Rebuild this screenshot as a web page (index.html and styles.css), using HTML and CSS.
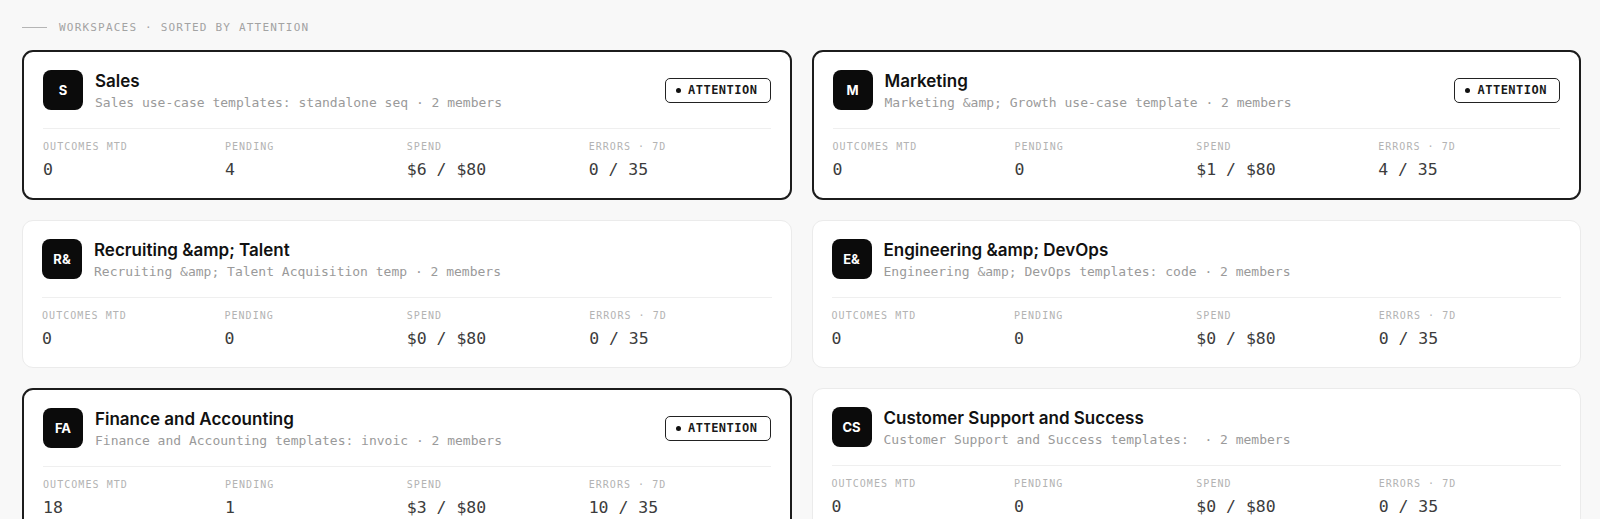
FILE: index.html
```html
<!DOCTYPE html>
<html lang="en">
<head>
<meta charset="utf-8">
<title>Workspaces</title>
<link rel="stylesheet" href="styles.css">
</head>
<body>
<div class="page">
  <div class="section-label"><span class="rule"></span><span>WORKSPACES · SORTED BY ATTENTION</span></div>
  <div class="grid">
    <div class="card attention">
      <div class="card-head">
        <div class="avatar">S</div>
        <div class="titles">
          <div class="title">Sales</div>
          <div class="sub">Sales use-case templates: standalone seq · 2 members</div>
        </div>
        <div class="badge"><span class="dot"></span>ATTENTION</div>
      </div>
      <div class="stats">
        <div class="stat"><div class="label">OUTCOMES MTD</div><div class="value">0</div></div>
        <div class="stat"><div class="label">PENDING</div><div class="value">4</div></div>
        <div class="stat"><div class="label">SPEND</div><div class="value">$6 / $80</div></div>
        <div class="stat"><div class="label">ERRORS · 7D</div><div class="value">0 / 35</div></div>
      </div>
    </div>

    <div class="card attention">
      <div class="card-head">
        <div class="avatar">M</div>
        <div class="titles">
          <div class="title">Marketing</div>
          <div class="sub">Marketing &amp;amp; Growth use-case template · 2 members</div>
        </div>
        <div class="badge"><span class="dot"></span>ATTENTION</div>
      </div>
      <div class="stats">
        <div class="stat"><div class="label">OUTCOMES MTD</div><div class="value">0</div></div>
        <div class="stat"><div class="label">PENDING</div><div class="value">0</div></div>
        <div class="stat"><div class="label">SPEND</div><div class="value">$1 / $80</div></div>
        <div class="stat"><div class="label">ERRORS · 7D</div><div class="value">4 / 35</div></div>
      </div>
    </div>

    <div class="card">
      <div class="card-head">
        <div class="avatar">R&amp;</div>
        <div class="titles">
          <div class="title">Recruiting &amp;amp; Talent</div>
          <div class="sub">Recruiting &amp;amp; Talent Acquisition temp · 2 members</div>
        </div>
      </div>
      <div class="stats">
        <div class="stat"><div class="label">OUTCOMES MTD</div><div class="value">0</div></div>
        <div class="stat"><div class="label">PENDING</div><div class="value">0</div></div>
        <div class="stat"><div class="label">SPEND</div><div class="value">$0 / $80</div></div>
        <div class="stat"><div class="label">ERRORS · 7D</div><div class="value">0 / 35</div></div>
      </div>
    </div>

    <div class="card">
      <div class="card-head">
        <div class="avatar">E&amp;</div>
        <div class="titles">
          <div class="title">Engineering &amp;amp; DevOps</div>
          <div class="sub">Engineering &amp;amp; DevOps templates: code · 2 members</div>
        </div>
      </div>
      <div class="stats">
        <div class="stat"><div class="label">OUTCOMES MTD</div><div class="value">0</div></div>
        <div class="stat"><div class="label">PENDING</div><div class="value">0</div></div>
        <div class="stat"><div class="label">SPEND</div><div class="value">$0 / $80</div></div>
        <div class="stat"><div class="label">ERRORS · 7D</div><div class="value">0 / 35</div></div>
      </div>
    </div>

    <div class="card attention">
      <div class="card-head">
        <div class="avatar">FA</div>
        <div class="titles">
          <div class="title">Finance and Accounting</div>
          <div class="sub">Finance and Accounting templates: invoic · 2 members</div>
        </div>
        <div class="badge"><span class="dot"></span>ATTENTION</div>
      </div>
      <div class="stats">
        <div class="stat"><div class="label">OUTCOMES MTD</div><div class="value">18</div></div>
        <div class="stat"><div class="label">PENDING</div><div class="value">1</div></div>
        <div class="stat"><div class="label">SPEND</div><div class="value">$3 / $80</div></div>
        <div class="stat"><div class="label">ERRORS · 7D</div><div class="value">10 / 35</div></div>
      </div>
    </div>

    <div class="card">
      <div class="card-head">
        <div class="avatar">CS</div>
        <div class="titles">
          <div class="title">Customer Support and Success</div>
          <div class="sub">Customer Support and Success templates:  · 2 members</div>
        </div>
      </div>
      <div class="stats">
        <div class="stat"><div class="label">OUTCOMES MTD</div><div class="value">0</div></div>
        <div class="stat"><div class="label">PENDING</div><div class="value">0</div></div>
        <div class="stat"><div class="label">SPEND</div><div class="value">$0 / $80</div></div>
        <div class="stat"><div class="label">ERRORS · 7D</div><div class="value">0 / 35</div></div>
      </div>
    </div>
  </div>
</div>
</body>
</html>
```

FILE: styles.css
```css
html, body {
  margin: 0;
  padding: 0;
  background: #f8f8f8;
}

body {
  font-family: "DejaVu Sans Mono", "Liberation Mono", monospace;
  color: #222;
}

.page {
  padding: 19px 19px 0 22px;
}

.section-label {
  display: flex;
  align-items: center;
  gap: 12px;
  height: 16px;
  margin-bottom: 15px;
  font-size: 11px;
  letter-spacing: 1.2px;
  color: #a3a3a3;
}

.section-label .rule {
  width: 25px;
  height: 1px;
  background: #b5b5b5;
}

.grid {
  display: grid;
  grid-template-columns: 1fr 1fr;
  gap: 20px;
}

.card {
  background: #ffffff;
  border: 1px solid #ebebeb;
  border-radius: 11px;
  padding: 18px 19px;
}

.card.attention {
  border: 2px solid #1c1c1c;
}

.card-head {
  display: flex;
  align-items: center;
  gap: 12px;
  height: 40px;
}

.avatar {
  width: 40px;
  height: 40px;
  flex: 0 0 40px;
  border-radius: 8px;
  background: #0b0b0b;
  color: #ffffff;
  display: flex;
  align-items: center;
  justify-content: center;
  font-family: Inter, "Noto Sans", sans-serif;
  font-weight: 700;
  font-size: 13px;
}

.titles {
  flex: 1;
  min-width: 0;
  align-self: flex-start;
}

.title {
  font-family: Inter, "Noto Sans", sans-serif;
  font-weight: 600;
  font-size: 17px;
  line-height: 22px;
  color: #111111;
}

.sub {
  margin-top: 2px;
  font-size: 13px;
  line-height: 18px;
  color: #9a9a9a;
  white-space: pre;
}

.badge {
  display: flex;
  align-items: center;
  gap: 7px;
  height: 25px;
  box-sizing: border-box;
  padding: 0 12px 0 10px;
  border: 1.5px solid #222222;
  border-radius: 5px;
  font-size: 12px;
  font-weight: 700;
  letter-spacing: 0.5px;
  color: #1a1a1a;
}

.badge .dot {
  width: 5px;
  height: 5px;
  border-radius: 50%;
  background: #111111;
}

.stats {
  margin-top: 18px;
  border-top: 1px solid #efefef;
  padding-top: 11px;
  display: grid;
  grid-template-columns: repeat(4, 1fr);
}

.label {
  font-size: 10px;
  line-height: 14px;
  letter-spacing: 1.05px;
  color: #b3b3b3;
}

.value {
  margin-top: 6px;
  font-size: 16.5px;
  line-height: 20px;
  color: #3c3c3c;
}
```
